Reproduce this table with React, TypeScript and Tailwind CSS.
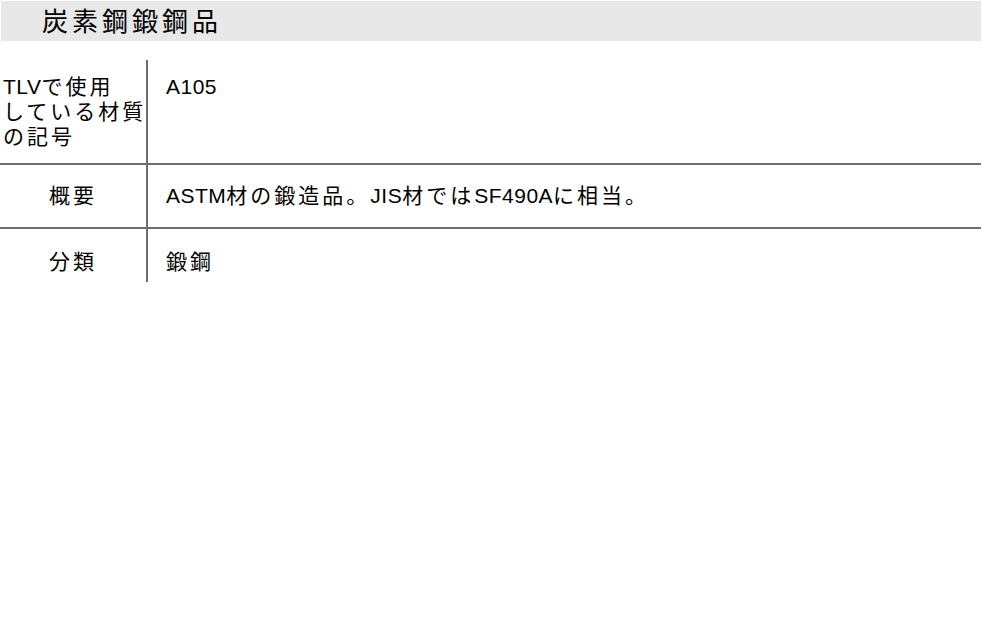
import React from 'react';

// 半角英数字だけ字間を詰めて表示
const Txt: React.FC<{ text: string }> = ({ text }) => {
  const parts = text.split(/([\x20-\x7E]+)/).filter((p) => p !== '');
  return (
    <>
      {parts.map((p, i) =>
        /^[\x20-\x7E]+$/.test(p) ? (
          <span key={i} className="tracking-[0.5px]">{p}</span>
        ) : (
          <span key={i}>{p}</span>
        )
      )}
    </>
  );
};

type Row = {
  label: React.ReactNode;
  value: string;
  cellClass: string;
  labelClass: string;
  border: boolean;
};

const rows: Row[] = [
  {
    label: (
      <>
        <div><Txt text="TLVで使用" /></div>
        <div>している材質</div>
        <div>の記号</div>
      </>
    ),
    value: 'A105',
    cellClass: 'h-[103px] pt-[14px] leading-[25px]',
    labelClass: 'pl-[3px] text-left',
    border: true,
  },
  {
    label: '概要',
    value: 'ASTM材の鍛造品。JIS材ではSF490Aに相当。',
    cellClass: 'h-[62px] pt-[19px]',
    labelClass: 'text-center',
    border: true,
  },
  {
    label: '分類',
    value: '鍛鋼',
    cellClass: 'h-[53px] pt-[21px]',
    labelClass: 'text-center',
    border: false,
  },
];

export default function App() {
  return (
    <div
      className="w-full h-[640px] bg-white text-black"
      style={{ fontFamily: '"Liberation Sans", "Noto Sans CJK JP", sans-serif' }}
    >
      {/* 見出し */}
      <div className="pt-px px-px">
        <div className="h-10 bg-[#e8e8e8] pl-[41px] pt-[2px] text-[26px] leading-[38px] tracking-[4px]">
          炭素鋼鍛鋼品
        </div>
      </div>

      {/* 仕様表 */}
      <div className="mt-[19px] w-[981px] text-[21px] leading-[24px] tracking-[3px]">
        {rows.map((r, i) => (
          <div
            key={i}
            className={r.border ? 'grid grid-cols-[148px_1fr] border-b-2 border-[#6e6e6e]' : 'grid grid-cols-[148px_1fr]'}
          >
            <div className={`border-r-2 border-[#6e6e6e] whitespace-nowrap ${r.labelClass} ${r.cellClass}`}>
              {r.label}
            </div>
            <div className={`pl-[18px] whitespace-nowrap ${r.cellClass}`}>
              <Txt text={r.value} />
            </div>
          </div>
        ))}
      </div>
    </div>
  );
}
